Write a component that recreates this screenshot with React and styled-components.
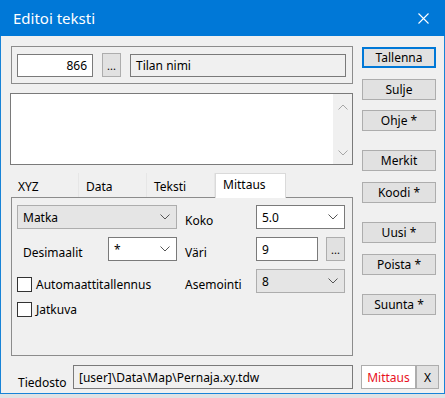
import styled, { createGlobalStyle } from "styled-components";

const Global = createGlobalStyle`
  html, body { margin: 0; padding: 0; }
  body {
    background: #dfe2e4;
    font-family: "Noto Sans", "Liberation Sans", sans-serif;
    font-size: 12px;
    color: #000;
  }
`;

const Window = styled.div`
  width: 445px;
  height: 394px;
  box-sizing: border-box;
  border: 1px solid #1883d7;
  border-top: none;
  background: #f0f0f0;
  display: flex;
  flex-direction: column;
`;

const TitleBar = styled.div`
  height: 36px;
  flex: none;
  margin: 0 -1px;
  background: #0078d7;
  color: #fff;
  font-size: 15px;
  display: flex;
  align-items: center;
  justify-content: space-between;
  padding: 0 16px 0 13px;
`;

const Body = styled.div`
  padding: 10px 0 0 10px;
  display: flex;
  flex-direction: column;
`;

const Main = styled.div`
  display: flex;
  gap: 9px;
`;

const LeftCol = styled.div`
  width: 342px;
  display: flex;
  flex-direction: column;
`;

const RightCol = styled.div`
  width: 74px;
  display: flex;
  flex-direction: column;
`;

const GroupBox = styled.div`
  height: 38px;
  box-sizing: border-box;
  border: 1px solid #8c8c8c;
  display: flex;
  align-items: center;
  padding: 0 6px 0 5px;
  gap: 9px;
`;

const Field = styled.div`
  box-sizing: border-box;
  height: ${(p) => p.h || 24}px;
  width: ${(p) => (p.w ? p.w + "px" : "auto")};
  flex: ${(p) => (p.grow ? 1 : "none")};
  border: 1px solid ${(p) => (p.light ? "#adadad" : "#7a7a7a")};
  background: ${(p) => p.bg || "#fff"};
  color: ${(p) => p.color || "#000"};
  display: flex;
  align-items: center;
  justify-content: ${(p) => p.align || "flex-start"};
  padding: 0 5px;
  white-space: nowrap;
`;

const DotsButton = styled.div`
  box-sizing: border-box;
  width: 19px;
  height: 24px;
  flex: none;
  margin-left: ${(p) => p.ml || 0}px;
  background: #e1e1e1;
  border: 1px solid #adadad;
  display: flex;
  align-items: flex-end;
  justify-content: center;
  padding-bottom: 5px;
  font-size: 11px;
  line-height: 1;
`;

const TextBox = styled.div`
  margin: 9px 0 0 -1px;
  width: 343px;
  height: 72px;
  box-sizing: border-box;
  border: 1px solid #7a7a7a;
  background: #fff;
  display: flex;
  justify-content: flex-end;
`;

const ScrollBar = styled.div`
  width: 19px;
  background: #f0f0f0;
  display: flex;
  flex-direction: column;
  align-items: center;
  justify-content: space-between;
  padding: 10px 0 8px;
`;

const TabRow = styled.div`
  margin-top: 8px;
  display: flex;
  height: 24px;
  position: relative;
  z-index: 1;
`;

const Tab = styled.div`
  box-sizing: border-box;
  width: ${(p) => p.w}px;
  height: ${(p) => (p.active ? 25 : 24)}px;
  padding: ${(p) => (p.active ? "2px" : "5px")} 0 0 7px;
  background: ${(p) => (p.active ? "#fff" : "#f0f0f0")};
  border-right: 1px solid ${(p) => (p.active ? "#dadada" : "#e6e6e6")};
  border-left: ${(p) => (p.active ? "1px solid #dadada" : "none")};
  border-top: ${(p) => (p.active ? "1px solid #dadada" : "none")};
`;

const Panel = styled.div`
  height: 159px;
  box-sizing: border-box;
  border: 1px solid #8c8c8c;
  padding: 7px 0 0 5px;
  display: grid;
  grid-template-columns: 160px 79px 89px;
  grid-auto-rows: 24px;
  row-gap: 8px;
`;

const Label = styled.div`
  align-self: end;
  padding-left: ${(p) => p.pl || 8}px;
  line-height: 16px;
  white-space: nowrap;
`;

const Cell = styled.div`
  display: flex;
  align-items: center;
  justify-content: space-between;
`;

const Check = styled.label`
  display: flex;
  align-items: center;
  gap: 4px;
  align-self: ${(p) => p.align || "center"};
  white-space: nowrap;
`;

const Box = styled.span`
  width: 15px;
  height: 15px;
  box-sizing: border-box;
  border: 1px solid #333;
  background: #fff;
`;

const ButtonStyled = styled.div`
  box-sizing: border-box;
  height: 21px;
  margin-top: ${(p) => p.mt}px;
  background: #e1e1e1;
  border: ${(p) => (p.primary ? "2px solid #0078d7" : "1px solid #adadad")};
  display: flex;
  align-items: center;
  justify-content: center;
`;

const Footer = styled.div`
  margin-top: 9px;
  display: flex;
  align-items: flex-end;
  height: 24px;
`;

const FooterLabel = styled.div`
  width: 62px;
  padding-left: 7px;
  box-sizing: border-box;
  line-height: 16px;
  margin-bottom: -2px;
`;

const Chevron = ({ up, color = "#555" }) => (
  <svg width="10" height="6" viewBox="0 0 10 6">
    <path
      d={up ? "M0.5 5.5 L5 1 L9.5 5.5" : "M0.5 0.5 L5 5 L9.5 0.5"}
      fill="none"
      stroke={color}
      strokeWidth="1"
    />
  </svg>
);

const Select = ({ value, w, gray }) => (
  <Field w={w} bg={gray ? "#e5e5e5" : "#fff"} light={gray} style={{ justifyContent: "space-between", paddingRight: 6 }}>
    <span>{value}</span>
    <Chevron />
  </Field>
);

const buttons = [
  ["Tallenna", 1, true],
  ["Sulje", 11],
  ["Ohje *", 10],
  ["Merkit", 19],
  ["Koodi *", 11],
  ["Uusi *", 19],
  ["Poista *", 11],
  ["Suunta *", 19],
];

export default function App() {
  return (
    <>
      <Global />
      <Window>
        <TitleBar>
          <span>Editoi teksti</span>
          <svg width="11" height="11" viewBox="0 0 11 11">
            <path d="M0.5 0.5 L10.5 10.5 M10.5 0.5 L0.5 10.5" stroke="#fff" strokeWidth="1.1" />
          </svg>
        </TitleBar>
        <Body>
          <Main>
            <LeftCol>
              <GroupBox>
                <Field w={76} h={23} align="flex-end">866</Field>
                <DotsButton>...</DotsButton>
                <Field grow h={23} bg="#f0f0f0">Tilan nimi</Field>
              </GroupBox>
              <TextBox>
                <ScrollBar>
                  <Chevron up color="#a6a6a6" />
                  <Chevron color="#a6a6a6" />
                </ScrollBar>
              </TextBox>
              <TabRow>
                <Tab w={68}>XYZ</Tab>
                <Tab w={68}>Data</Tab>
                <Tab w={68}>Teksti</Tab>
                <Tab w={71} active>Mittaus</Tab>
              </TabRow>
              <Panel>
                <Select value="Matka" w={160} gray />
                <Label>Koko</Label>
                <Select value="5.0" w={89} />

                <Cell>
                  <Label pl={6}>Desimaalit</Label>
                  <Select value="*" w={69} />
                </Cell>
                <Label>Väri</Label>
                <Cell>
                  <Field w={62}>9</Field>
                  <DotsButton>...</DotsButton>
                </Cell>

                <Check align="end">
                  <Box />
                  Automaattitallennus
                </Check>
                <Label>Asemointi</Label>
                <Select value="8" w={89} gray />

                <Check align="start">
                  <Box />
                  Jatkuva
                </Check>
              </Panel>
            </LeftCol>
            <RightCol>
              {buttons.map(([t, mt, primary]) => (
                <ButtonStyled key={t} mt={mt} primary={primary}>
                  {t}
                </ButtonStyled>
              ))}
            </RightCol>
          </Main>
          <Footer>
            <FooterLabel>Tiedosto</FooterLabel>
            <Field w={280} bg="#f0f0f0">[user]\Data\Map\Pernaja.xy.tdw</Field>
            <Field w={55} light color="#e81123" align="center" style={{ marginLeft: 8 }}>
              Mittaus
            </Field>
            <Field w={23} light bg="#e1e1e1" align="center">X</Field>
          </Footer>
        </Body>
      </Window>
    </>
  );
}
